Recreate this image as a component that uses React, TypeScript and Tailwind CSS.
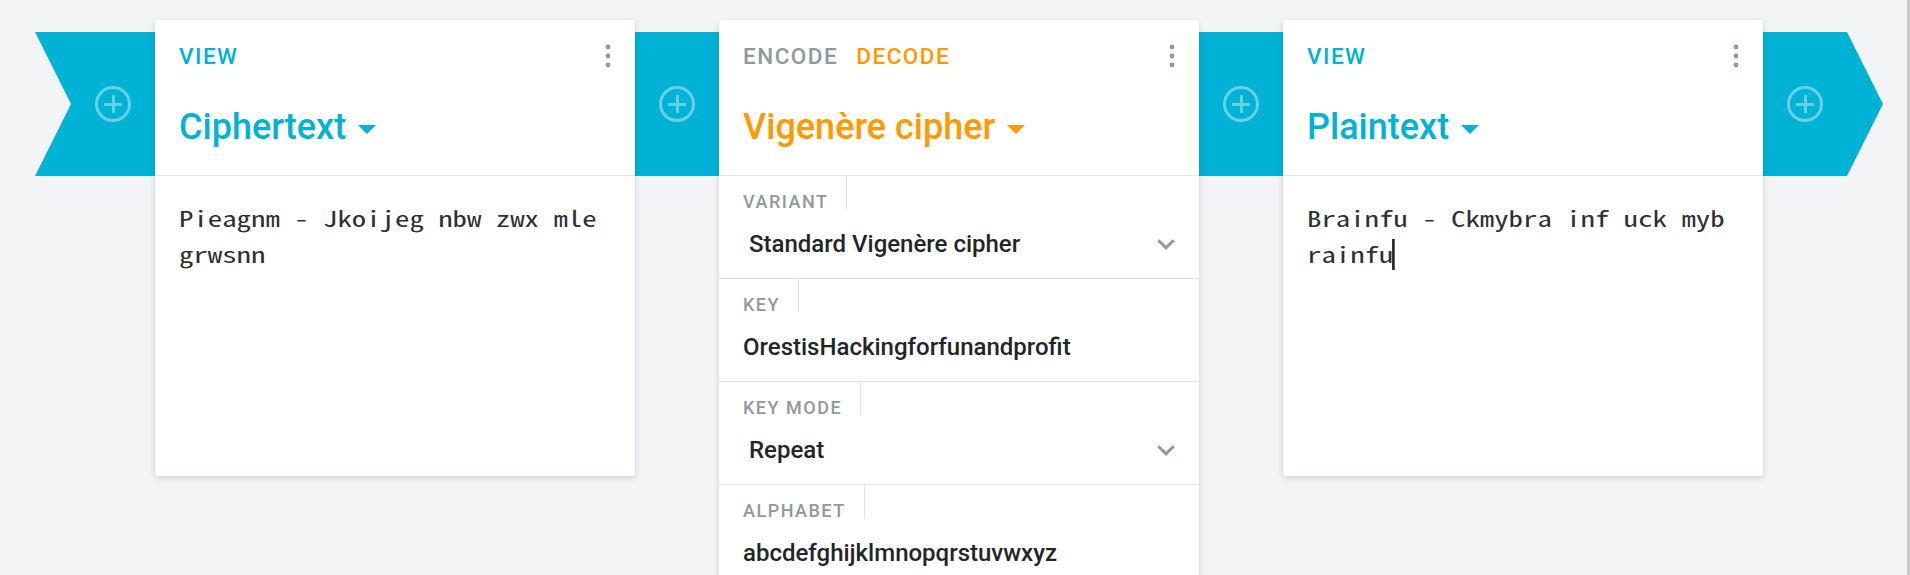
import type { ReactNode } from "react";

function AddButton() {
  return (
    <button aria-label="Add" className="mt-[86px] h-9 w-9 shrink-0 self-start">
      <svg viewBox="0 0 36 36" className="block h-9 w-9" fill="none" stroke="#66d0e5" strokeWidth="3">
        <circle cx="18" cy="18" r="16.5" />
        <path d="M9 18.5h18M18.500 9v18" />
      </svg>
    </button>
  );
}

function Gap() {
  return (
    <div className="flex h-[176px] w-[84px] shrink-0 justify-center">
      <AddButton />
    </div>
  );
}

type Mode = { label: string; className: string };

function Brick({
  modes,
  title,
  color,
  className,
  children,
}: {
  modes: Mode[];
  title: string;
  color: string;
  className: string;
  children: ReactNode;
}) {
  return (
    <section
      className={`mt-5 flex w-[480px] shrink-0 flex-col rounded-[3px] bg-white shadow-[0_2px_6px_rgba(20,30,40,0.15)] ${className}`}
    >
      <header className={`flex h-[156px] shrink-0 flex-col border-b border-[#e3e5e7] px-6 ${color}`}>
        <div className="flex h-[72px] items-center justify-between">
          <div className="flex gap-[18px] text-[22.5px] leading-[30px] font-medium tracking-[1.5px]">
            {modes.map((mode) => (
              <span key={mode.label} className={mode.className}>
                {mode.label}
              </span>
            ))}
          </div>
          <svg viewBox="0 0 6 24" className="h-6 w-1.5" fill="#8f999e">
            <circle cx="3" cy="3" r="2.4" />
            <circle cx="3" cy="12" r="2.4" />
            <circle cx="3" cy="21" r="2.4" />
          </svg>
        </div>
        <h2 className="flex h-[70px] items-center gap-3 text-[36px] leading-[48px] font-medium">
          {title}
          <svg viewBox="0 0 18 9" className="mt-1 h-[9px] w-[18px]" fill="currentColor">
            <path d="M0 0h18L9 9z" />
          </svg>
        </h2>
      </header>
      {children}
    </section>
  );
}

function Field({ label, value, select = false }: { label: string; value: string; select?: boolean }) {
  return (
    <div className="flex h-[103px] shrink-0 flex-col border-b border-[#dfe4e8] pl-6">
      <div className="flex h-[33px] self-start border-r border-[#dfe4e8] pt-[13px] pr-[18px] text-[18px] leading-[26px] font-medium tracking-[1.5px] text-[#8f999e]">
        {label}
      </div>
      <div
        className={`flex h-[69px] items-center justify-between pr-6 text-[24px] leading-9 font-medium text-[#222628] ${select ? "pl-1.5" : ""}`}
      >
        {value}
        {select && (
          <svg viewBox="0 0 18 11" className="mt-px h-[11px] w-[18px]" fill="none" stroke="#8f999e" strokeWidth="3">
            <path d="M1.300 1.300l7.700 7.600 7.700-7.600" />
          </svg>
        )}
      </div>
    </div>
  );
}

function TextView({ lines, caret = false }: { lines: string[]; caret?: boolean }) {
  return (
    <div className="px-6 pt-[23px] font-['Noto_Sans_Mono_CJK_SC','Liberation_Mono',monospace] text-[22px] leading-9 text-[#2c3033]">
      {lines.map((line, index) => (
        <div key={line} className="flex h-9 w-[330px] origin-left scale-x-[1.309] items-center whitespace-pre">
          {line}
          {caret && index === lines.length - 1 && <span className="mt-[3px] -ml-px h-[31px] w-[1.5px] bg-[#222628]" />}
        </div>
      ))}
    </div>
  );
}

const cyan = "text-[#00b2d5]";
const orange = "text-[#ff9900]";

export default function App() {
  return (
    <div className="flex h-[575px] w-[1910px] overflow-hidden bg-[#f2f4f6] font-['Roboto',sans-serif]">
      <main className="relative flex w-[1907px] shrink-0 pl-[35px]">
        <svg
          viewBox="0 0 1848 144"
          className="absolute top-8 left-[35px] h-36 w-[1848px]"
          fill="#00b2d5"
        >
          <path d="M0 0H1812L1848 72L1812 144H0L36 72z" />
        </svg>
        <div className="relative flex shrink-0 items-start">
          <div className="flex w-[120px] pl-[60px]">
            <AddButton />
          </div>
          <Brick
            title="Ciphertext"
            color={cyan}
            className="h-[456px]"
            modes={[{ label: "VIEW", className: cyan }]}
          >
            <TextView lines={["Pieagnm - Jkoijeg nbw zwx mle", "grwsnn"]} />
          </Brick>
          <Gap />
          <Brick
            title="Vigenère cipher"
            color={orange}
            className="h-[640px]"
            modes={[
              { label: "ENCODE", className: "text-[#8f999e]" },
              { label: "DECODE", className: orange },
            ]}
          >
            <Field label="VARIANT" value="Standard Vigenère cipher" select />
            <Field label="KEY" value="OrestisHackingforfunandprofit" />
            <Field label="KEY MODE" value="Repeat" select />
            <Field label="ALPHABET" value="abcdefghijklmnopqrstuvwxyz" />
          </Brick>
          <Gap />
          <Brick
            title="Plaintext"
            color={cyan}
            className="h-[456px]"
            modes={[{ label: "VIEW", className: cyan }]}
          >
            <TextView lines={["Brainfu - Ckmybra inf uck myb", "rainfu"]} caret />
          </Brick>
          <Gap />
        </div>
      </main>
      <div className="w-[3px] shrink-0 bg-[#cbcbcb]" />
    </div>
  );
}
